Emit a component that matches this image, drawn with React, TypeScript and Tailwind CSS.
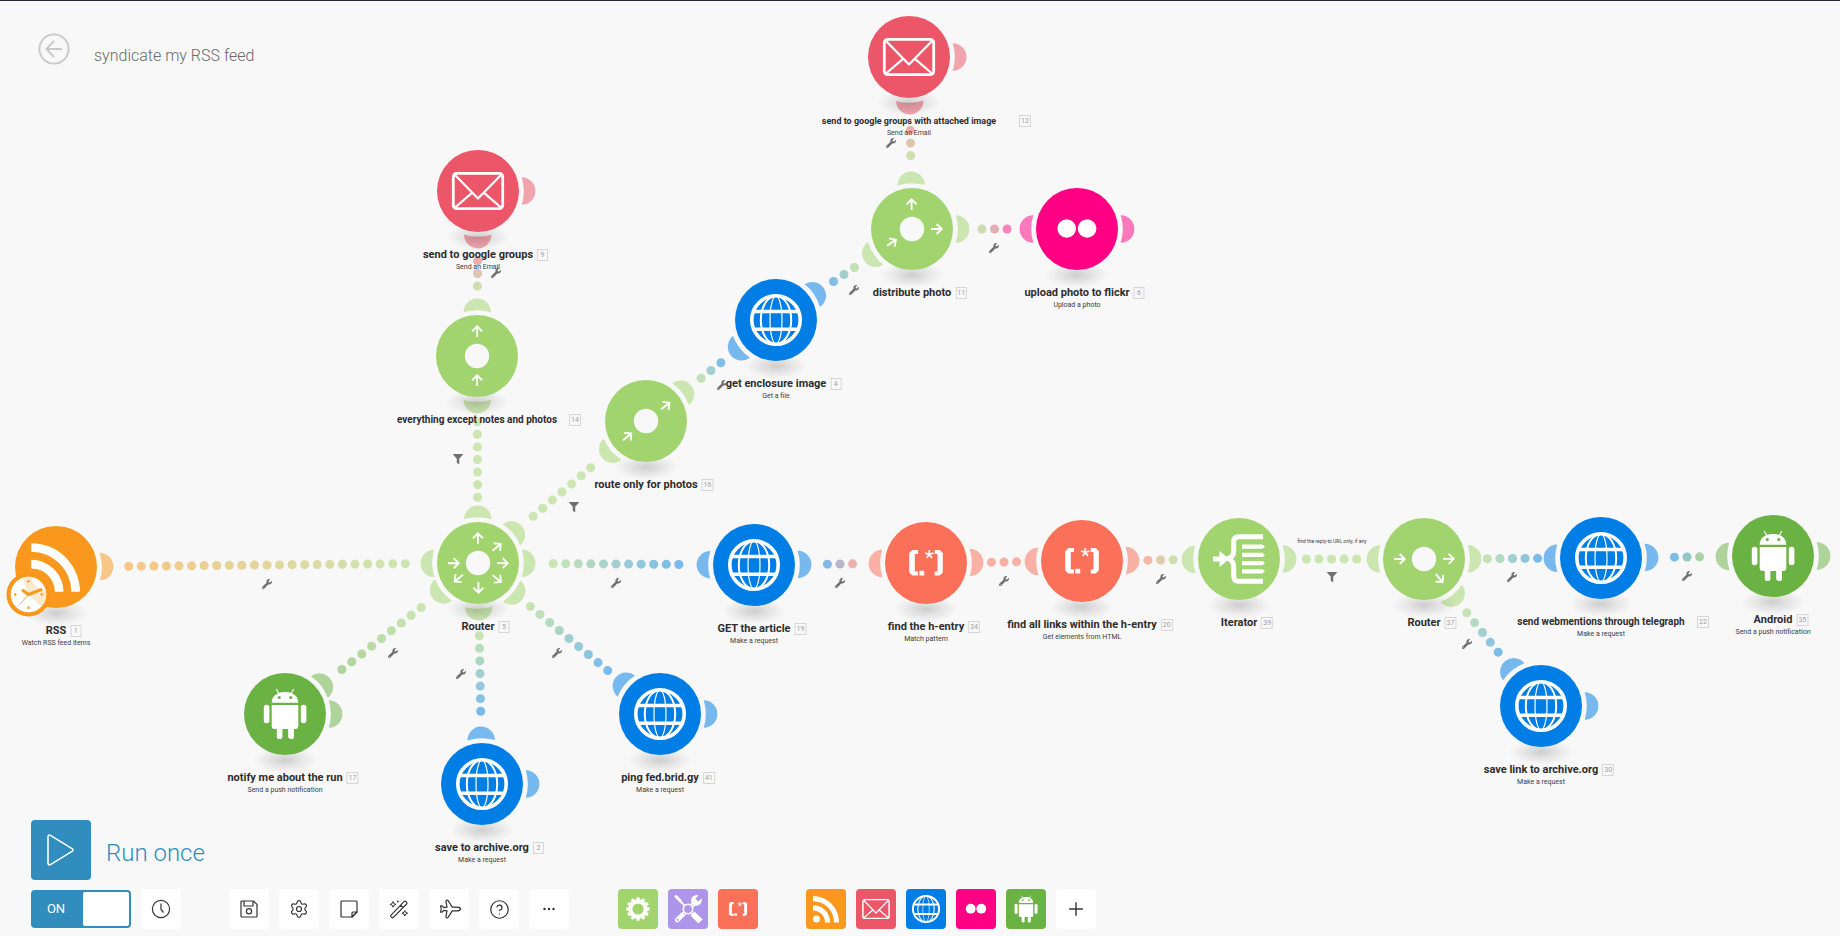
import React from "react";
import { Settings, Plane, CircleHelp } from "lucide-react";
import { FaFilter, FaWrench } from "react-icons/fa";

type Kind = "rss" | "router" | "email" | "globe" | "flickr" | "regex" | "iterator" | "android";

type ModuleNode = {
  id: number;
  kind: Kind;
  x: number;
  y: number;
  title: string;
  sub?: string;
  openPort?: boolean;
  titleClass?: string;
};

type Edge = { from: number; to: number; dots: number };

const COLORS: Record<Kind, string> = {
  rss: "#f9981d",
  router: "#a1d46f",
  email: "#eb5668",
  globe: "#007ee6",
  flickr: "#ff0084",
  regex: "#fb7058",
  iterator: "#a1d46f",
  android: "#6bb245",
};

const NODES: ModuleNode[] = [
  { id: 1, kind: "rss", x: 56, y: 567, title: "RSS", sub: "Watch RSS feed items" },
  { id: 5, kind: "router", x: 478, y: 563, title: "Router" },
  { id: 14, kind: "router", x: 477, y: 356, title: "everything except notes and photos", titleClass: "text-[10px] min-w-[176px]" },
  { id: 9, kind: "email", x: 478, y: 191, title: "send to google groups", sub: "Send an Email", openPort: true },
  { id: 16, kind: "router", x: 646, y: 421, title: "route only for photos" },
  { id: 4, kind: "globe", x: 776, y: 320, title: "get enclosure image", sub: "Get a file" },
  { id: 11, kind: "router", x: 912, y: 229, title: "distribute photo" },
  { id: 12, kind: "email", x: 909, y: 57, title: "send to google groups with attached image", sub: "Send an Email", openPort: true, titleClass: "text-[9px] min-w-[212px]" },
  { id: 6, kind: "flickr", x: 1077, y: 229, title: "upload photo to flickr", sub: "Upload a photo", openPort: true },
  { id: 17, kind: "android", x: 285, y: 714, title: "notify me about the run", sub: "Send a push notification", openPort: true },
  { id: 2, kind: "globe", x: 482, y: 784, title: "save to archive.org", sub: "Make a request", openPort: true },
  { id: 41, kind: "globe", x: 660, y: 714, title: "ping fed.brid.gy", sub: "Make a request", openPort: true },
  { id: 19, kind: "globe", x: 754, y: 565, title: "GET the article", sub: "Make a request" },
  { id: 24, kind: "regex", x: 926, y: 563, title: "find the h-entry", sub: "Match pattern" },
  { id: 20, kind: "regex", x: 1082, y: 561, title: "find all links within the h-entry", sub: "Get elements from HTML" },
  { id: 39, kind: "iterator", x: 1239, y: 559, title: "Iterator" },
  { id: 37, kind: "router", x: 1424, y: 559, title: "Router" },
  { id: 22, kind: "globe", x: 1601, y: 558, title: "send webmentions through telegraph", sub: "Make a request", titleClass: "text-[10px] min-w-[184px]" },
  { id: 35, kind: "android", x: 1773, y: 556, title: "Android", sub: "Send a push notification", openPort: true },
  { id: 30, kind: "globe", x: 1541, y: 706, title: "save link to archive.org", sub: "Make a request", openPort: true },
];

const EDGES: Edge[] = [
  { from: 1, to: 5, dots: 23 },
  { from: 5, to: 14, dots: 7 },
  { from: 14, to: 9, dots: 3 },
  { from: 5, to: 16, dots: 7 },
  { from: 16, to: 4, dots: 3 },
  { from: 4, to: 11, dots: 3 },
  { from: 11, to: 12, dots: 3 },
  { from: 11, to: 6, dots: 3 },
  { from: 5, to: 17, dots: 9 },
  { from: 5, to: 2, dots: 7 },
  { from: 5, to: 41, dots: 9 },
  { from: 5, to: 19, dots: 11 },
  { from: 19, to: 24, dots: 3 },
  { from: 24, to: 20, dots: 3 },
  { from: 20, to: 39, dots: 3 },
  { from: 39, to: 37, dots: 5 },
  { from: 37, to: 22, dots: 5 },
  { from: 22, to: 35, dots: 3 },
  { from: 37, to: 30, dots: 5 },
];

const WRENCHES: [number, number][] = [
  [267, 584], [393, 653], [461, 674], [557, 653], [616, 583], [840, 583], [1004, 581], [1161, 579],
  [1512, 577], [1467, 644], [1687, 576], [496, 273], [891, 143], [994, 248], [854, 290], [722, 385],
];

const FILTERS: [number, number][] = [[1332, 577], [574, 507], [458, 459]];

const DOT_STEP = 12.57;
const byId = new Map(NODES.map((n) => [n.id, n]));

function mix(a: string, b: string, t: number): string {
  const channel = (c: string, i: number) => parseInt(c.slice(1 + i * 2, 3 + i * 2), 16);
  const parts = [0, 1, 2].map((i) => Math.round(channel(a, i) * (1 - t) + channel(b, i) * t));
  return `rgb(${parts.join(",")})`;
}

function angle(a: ModuleNode, b: ModuleNode): number {
  return (Math.atan2(b.y - a.y, b.x - a.x) * 180) / Math.PI;
}

function Connections() {
  return (
    <svg className="absolute inset-0 h-full w-full" aria-hidden="true">
      <defs>
        <radialGradient id="node-shadow">
          <stop offset="0" stopColor="#000" stopOpacity="0.17" />
          <stop offset="0.5" stopColor="#000" stopOpacity="0.08" />
          <stop offset="1" stopColor="#000" stopOpacity="0" />
        </radialGradient>
      </defs>
      {EDGES.map((e) => {
        const a = byId.get(e.from)!;
        const b = byId.get(e.to)!;
        const length = Math.hypot(b.x - a.x, b.y - a.y);
        const start = (length - (e.dots - 1) * DOT_STEP) / 2;
        return Array.from({ length: e.dots }, (_, i) => {
          const d = (start + i * DOT_STEP) / length;
          return (
            <circle
              key={`${e.from}-${e.to}-${i}`}
              cx={a.x + (b.x - a.x) * d}
              cy={a.y + (b.y - a.y) * d}
              r="4.5"
              fill={mix(COLORS[a.kind], COLORS[b.kind], (i + 0.3) / (e.dots - 0.4))}
              opacity="0.52"
            />
          );
        });
      })}
      {NODES.map((n) => {
        const ports = EDGES.filter((e) => e.from === n.id || e.to === n.id).map((e) =>
          angle(n, byId.get(e.from === n.id ? e.to : e.from)!),
        );
        if (n.openPort) ports.push(0);
        return (
          <g key={n.id} transform={`translate(${n.x} ${n.y})`}>
            {ports.map((p) => (
              <path
                key={p}
                d="M43.7-13.7A13.7 13.7 0 0 1 43.7 13.7A45.5 45.5 0 0 0 43.7-13.7Z"
                fill={COLORS[n.kind]}
                opacity="0.52"
                transform={`rotate(${p})`}
              />
            ))}
            <ellipse cy="46" rx="32" ry="13" fill="url(#node-shadow)" />
          </g>
        );
      })}
    </svg>
  );
}

function Globe() {
  return (
    <g fill="none" stroke="#fff">
      <circle r="24.2" strokeWidth="3.6" />
      <path d="M-22.5-8.5H22.5M-22.5 9.3H22.5" strokeWidth="3.6" />
      <ellipse rx="15.2" ry="24" strokeWidth="2" />
      <ellipse rx="6" ry="24" strokeWidth="1.2" />
    </g>
  );
}

function Envelope() {
  return (
    <g fill="none" stroke="#fff" strokeLinejoin="round">
      <rect x="-24.7" y="-17.7" width="49.4" height="35.4" rx="3.5" strokeWidth="2.8" />
      <path d="M-23.5-16.5L0 7.5L23.5-16.5M-23 16.5L-6 1.8M23 16.5L6 1.8" strokeWidth="2.3" />
    </g>
  );
}

function Regex() {
  return (
    <g>
      <path
        fill="#fff"
        d="M-8-13V-9H-11.2V8.6H-8V12.6H-13.5L-16.8 9.6V-10L-13.5-13ZM8.7-13V-9H11.5V8.6H8.7V12.6H13.7L16.8 9.6V-10L13.7-13ZM-6.7 7.7H-1.8V12.6H-6.7Z"
      />
      <path stroke="#fff" strokeWidth="1.7" d="M3.3-8.6V-13M3.3-8.6L7.5-10M3.3-8.6L5.9-5M3.3-8.6L.7-5M3.3-8.6L-.9-10" />
    </g>
  );
}

function Android({ eyes }: { eyes: string }) {
  return (
    <g>
      <path
        fill="#fff"
        d="M-13.3-11.2C-13.3-17-9-22 0-22S13.3-17 13.3-11.2ZM-13.3-9H13.3V12.6Q13.3 15 11 15H9V23Q9 25 6.2 25T3.2 23V15H-2.6V23Q-2.6 25-5.4 25T-8.2 23V15H-11Q-13.3 15-13.3 12.6Z"
      />
      <rect x="-21.2" y="-9.2" width="5.6" height="18.4" rx="2.6" fill="#fff" />
      <rect x="15.8" y="-9.2" width="5.6" height="18.4" rx="2.6" fill="#fff" />
      <path stroke="#fff" strokeWidth="1.2" d="M-8.8-25L-6.3-20.5M8.8-25L6.3-20.5" />
      <circle cx="-5.8" cy="-16.5" r="1.6" fill={eyes} />
      <circle cx="5.8" cy="-16.5" r="1.6" fill={eyes} />
    </g>
  );
}

function Iterator() {
  return (
    <g>
      <path
        fill="none"
        stroke="#fff"
        strokeWidth="5"
        d="M24-22.3H-.5Q-5.3-22.3-5.3-17V-7.5Q-5.3-2.5-10.5-.6Q-5.3 2.5-5.3 7.5V17Q-5.3 22.3-.5 22.3H24"
      />
      <path fill="#fff" d="M-26-2.6H-19.5V-8L-9.5 0L-19.5 8V2.6H-26Z" />
      <path
        fill="#fff"
        d="M3-14.4H23.5L26-12.3L23.5-10.2H3ZM3-6.2H23.5L26-4.1L23.5-2H3ZM3 2H23.5L26 4.1L23.5 6.2H3ZM3 10.2H23.5L26 12.3L23.5 14.4H3Z"
      />
    </g>
  );
}

function RssWithClock() {
  return (
    <g>
      <path
        fill="#fff"
        d="M-24.8-23.8A48.7 48.7 0 0 1 24 24.8H15.3A40 40 0 0 0-24.8-15.3ZM-24.8-7.3A32.3 32.3 0 0 1 7.5 24.8H-1.2A23.4 23.4 0 0 0-24.8 1.4Z"
      />
      <g transform="translate(-27.5 27.5)">
        <circle r="22" fill="#f9981d" />
        <circle r="21" fill="none" stroke="#e88a12" strokeWidth="0.6" opacity="0.5" />
        <circle r="17.8" fill="#fff" />
        <path fill="#fde8d0" d="M0 0L-6-16.7A17.8 17.8 0 0 1 3-17.5Q4-9 11.5-6L17-4.8A17.8 17.8 0 0 1 13 12Z" />
        <path stroke="#f9981d" strokeWidth="3" strokeLinecap="round" d="M-5.5-4L0 0L12.5-4.8" fill="none" />
        <path stroke="#f9981d" strokeWidth="0.8" d="M2-2L-9 10" />
        <g fill="#f9981d">
          <circle cy="-13.2" r="1.2" />
          <circle cy="13.2" r="1.2" />
          <circle cx="-13.2" r="1.2" />
          <circle cx="13.2" r="1.2" />
        </g>
      </g>
    </g>
  );
}

function RouterGlyph({ node }: { node: ModuleNode }) {
  const links = EDGES.filter((e) => e.from === node.id || e.to === node.id);
  return (
    <g>
      <circle r="12.2" fill="#f8f8f8" />
      {links.map((e) => {
        const outgoing = e.from === node.id;
        const a = angle(node, byId.get(outgoing ? e.to : e.from)!);
        return (
          <g key={`${e.from}-${e.to}`} transform={`rotate(${a}) translate(24.5 0) rotate(${outgoing ? 0 : 180})`}>
            <path d="M-5.5 0H5M.2-5L5.2 0L.2 5" fill="none" stroke="#fff" strokeWidth="1.9" />
          </g>
        );
      })}
    </g>
  );
}

function Glyph({ node }: { node: ModuleNode }) {
  switch (node.kind) {
    case "rss":
      return <RssWithClock />;
    case "router":
      return <RouterGlyph node={node} />;
    case "email":
      return <Envelope />;
    case "globe":
      return <Globe />;
    case "flickr":
      return (
        <g fill="#fff">
          <circle cx="-10.3" cy="-0.5" r="9.3" />
          <circle cx="10.1" cy="-0.5" r="9.3" />
        </g>
      );
    case "regex":
      return <Regex />;
    case "iterator":
      return <Iterator />;
    case "android":
      return <Android eyes={COLORS.android} />;
  }
}

function NodeView({ node }: { node: ModuleNode }) {
  return (
    <div className="absolute" style={{ left: node.x, top: node.y }}>
      <button type="button" aria-label={node.title} className="absolute -top-[41px] -left-[41px] block size-[82px] rounded-full">
        <svg viewBox="-41 -41 82 82" className="size-full overflow-visible">
          <circle r="41" fill={COLORS[node.kind]} />
          <Glyph node={node} />
        </svg>
      </button>
      <div className="absolute top-[57px] left-0 flex -translate-x-1/2 flex-col items-center whitespace-nowrap">
        <div className={`relative text-center leading-[14px] font-bold text-[#2d2d2d] ${node.titleClass ?? "text-[11px]"}`}>
          {node.title}
          <span className="absolute top-px left-full ml-1 flex h-3 min-w-[11px] items-center justify-center border border-[#d6d6d6] px-px text-[7px] leading-none font-normal text-[#a0a0a0]">
            {node.id}
          </span>
        </div>
        {node.sub && <div className="text-[7px] leading-[10px] text-[#3c3c3c]">{node.sub}</div>}
      </div>
    </div>
  );
}

function ToolButton({ label, children }: { label: string; children: React.ReactNode }) {
  return (
    <button type="button" aria-label={label} className="flex size-10 items-center justify-center rounded bg-white text-[#333]">
      {children}
    </button>
  );
}

function AppButton({ label, color, children }: { label: string; color: string; children: React.ReactNode }) {
  return (
    <button type="button" aria-label={label} className={`size-10 overflow-hidden rounded ${color}`}>
      <svg viewBox="-20 -20 40 40" className="size-full">
        {children}
      </svg>
    </button>
  );
}

const TEETH = Array.from({ length: 12 }, (_, i) => i * 30);

export default function App() {
  return (
    <div className="relative flex min-h-screen flex-col overflow-hidden border-t border-[#28263a] bg-[#f8f8f8] font-[Roboto,sans-serif]">
      <main aria-label="Scenario" className="absolute inset-x-0 -top-px bottom-0">
        <Connections />
        {NODES.map((n) => (
          <NodeView key={n.id} node={n} />
        ))}
        {WRENCHES.map(([x, y]) => (
          <div key={`${x}-${y}`} className="absolute -translate-1/2 text-[10px] text-[#6f6f6f]" style={{ left: x, top: y }}>
            <FaWrench />
          </div>
        ))}
        {FILTERS.map(([x, y]) => (
          <div key={`${x}-${y}`} className="absolute -translate-1/2 text-[10px] text-[#6f6f6f]" style={{ left: x, top: y }}>
            <FaFilter />
          </div>
        ))}
        <div className="absolute top-[541px] left-[1332px] -translate-1/2 text-[5px] leading-2 whitespace-nowrap text-[#3c3c3c]">
          find the reply-to URL only, if any
        </div>
      </main>

      <header className="relative flex w-fit items-start gap-6 pt-8 pl-[38px]">
        <button type="button" aria-label="Back" className="text-[#c9c9c9]">
          <svg viewBox="0 0 32 32" className="size-8" fill="none" stroke="currentColor" strokeWidth="1.9">
            <circle cx="16" cy="16" r="14.6" />
            <path d="M24 16H8.8M16 8L8.4 16L16 24" />
          </svg>
        </button>
        <h1 className="pt-[11px] text-base leading-6 font-light text-[#6a6a6a]">syndicate my RSS feed</h1>
      </header>

      <footer className="relative mt-auto flex w-fit flex-col gap-2 pb-[7px] pl-[31px]">
        <button type="button" className="flex w-fit items-center gap-[15px] text-2xl font-light text-[#308dbd]">
          <span className="flex size-[60px] items-center justify-center rounded bg-[#308dbd]">
            <svg viewBox="0 0 30 34" className="h-[34px] w-[30px]" fill="none" stroke="#fff" strokeWidth="1.6" strokeLinejoin="round">
              <path d="M2 4.2Q2 .9 4.8 2.6L26 15.6Q28 17 26 18.4L4.8 31.4Q2 33.1 2 29.8Z" />
            </svg>
          </span>
          <span className="pt-1.5">Run once</span>
        </button>

        <div className="flex items-center gap-12 pt-px">
          <div className="flex items-center gap-[10px]">
            <label className="flex h-[38px] w-[100px] items-stretch rounded bg-[#308dbd] p-0.5 text-[13px] text-white">
              <input type="checkbox" role="switch" defaultChecked aria-label="Scheduling" className="sr-only" />
              <span className="flex flex-1 items-center justify-center pr-1">ON</span>
              <span className="w-[46px] rounded-xs bg-white" />
            </label>
            <ToolButton label="Schedule">
              <svg viewBox="0 0 20 20" className="size-5" fill="none" stroke="currentColor" strokeWidth="1.2">
                <circle cx="10" cy="10" r="8.6" />
                <path d="M10 4.5V10.5L12.5 13.5" />
              </svg>
            </ToolButton>
          </div>

          <div className="flex items-center gap-[10px]">
            <ToolButton label="Save">
              <svg viewBox="0 0 20 20" className="size-5" fill="none" stroke="currentColor" strokeWidth="1.2" strokeLinejoin="round">
                <path d="M2 3Q2 2 3 2H14.5L18 5.5V17Q18 18 17 18H3Q2 18 2 17Z" />
                <path d="M5 2V7H14V2" />
                <circle cx="10" cy="12.2" r="2.6" />
              </svg>
            </ToolButton>
            <ToolButton label="Scenario settings">
              <Settings size={20} strokeWidth={1.4} />
            </ToolButton>
            <ToolButton label="Notes">
              <svg viewBox="0 0 20 20" className="size-5" fill="none" stroke="currentColor" strokeWidth="1.2" strokeLinejoin="round">
                <path d="M3 2H17Q18 2 18 3V13L13 18H3Q2 18 2 17V3Q2 2 3 2Z" />
                <path d="M18 13H14Q13 13 13 14V18Z" />
              </svg>
            </ToolButton>
            <ToolButton label="Auto-align">
              <svg viewBox="0 0 20 20" className="size-5" fill="none" stroke="currentColor" strokeWidth="1.2" strokeLinejoin="round">
                <path d="M1.8 16.4L15 2.6Q16 1.6 17 2.6L17.6 3.2Q18.4 4.2 17.6 5L4.4 18.4Q3.6 19 2.8 18.4L1.9 17.6Q1.3 17 1.8 16.4ZM11.6 6.2L14.2 8.6" />
                <path strokeWidth="1" d="M4 2.6L5 4.6L7 5.4L5 6.2L4 8.2L3.2 6.2L1.2 5.4L3.2 4.6ZM15.8 11.6L16.6 13.4L18.6 14.2L16.6 15L15.8 17L15 15L13 14.2L15 13.4ZM8.8 1.6V3.4M7.9 2.5H9.7" />
              </svg>
            </ToolButton>
            <ToolButton label="Explain flow">
              <Plane size={22} strokeWidth={1.3} className="rotate-45" />
            </ToolButton>
            <ToolButton label="Help">
              <CircleHelp size={21} strokeWidth={1.4} />
            </ToolButton>
            <ToolButton label="More">
              <svg viewBox="0 0 20 20" className="size-5" fill="currentColor">
                <circle cx="5.5" cy="10" r="1.2" />
                <circle cx="10" cy="10" r="1.2" />
                <circle cx="14.5" cy="10" r="1.2" />
              </svg>
            </ToolButton>
          </div>

          <div className="flex items-center gap-[10px] pl-px">
            <AppButton label="Flow control" color="bg-[#a1d46f]">
              <circle r="7.6" fill="none" stroke="#fff" strokeWidth="4" />
              {TEETH.map((t) => (
                <path key={t} d="M-1.9-8.5L-1.2-11.4H1.2L1.9-8.5Z" fill="#fff" stroke="#fff" strokeWidth="0.5" transform={`rotate(${t})`} />
              ))}
            </AppButton>
            <AppButton label="Tools" color="bg-[#ad95e9]">
              <g stroke="#fff">
                <path d="M-9-9L6 6" strokeWidth="1.8" />
                <path d="M-12-12.5L-8-8.5" strokeWidth="3" strokeLinecap="round" />
                <path d="M4.5 4.5L12.5 12.5" strokeWidth="6" />
                <path d="M-10.8 11.2L7-6.5" strokeWidth="4.6" strokeLinecap="round" />
              </g>
              <path fill="#fff" d="M10.6-13.7L7.4-10.2L10.2-7.4L13.7-10.6A5.8 5.8 0 0 1 5.2-4.2L3.4-6.2A5.8 5.8 0 0 1 10.6-13.7Z" />
              <circle cx="-10.4" cy="10.8" r="1.1" fill="#ad95e9" />
              <circle r="5.6" fill="#fff" />
              <circle r="6.1" fill="none" stroke="#ad95e9" strokeWidth="1" strokeDasharray="1.6 1.6" />
              <circle r="3.9" fill="#ad95e9" />
            </AppButton>
            <AppButton label="Text parser" color="bg-[#fb7058]">
              <g transform="scale(0.54)">
                <Regex />
              </g>
            </AppButton>
          </div>

          <div className="flex items-center gap-[10px]">
            <AppButton label="RSS" color="bg-[#f9981d]">
              <path fill="#fff" d="M-13-13A26 26 0 0 1 13 13.5H8A21 21 0 0 0-13-7.8ZM-13-3.8A17.2 17.2 0 0 1 4.2 13.5H-1A12 12 0 0 0-13 1.4Z" />
              <circle cx="-9.6" cy="10" r="3.5" fill="#fff" />
            </AppButton>
            <AppButton label="Email" color="bg-[#eb5668]">
              <g transform="scale(0.53)">
                <Envelope />
              </g>
            </AppButton>
            <AppButton label="HTTP" color="bg-[#007ee6]">
              <g transform="scale(0.54)">
                <Globe />
              </g>
            </AppButton>
            <AppButton label="Flickr" color="bg-[#ff0084]">
              <circle cx="-5.3" cy="-0.3" r="4.9" fill="#fff" />
              <circle cx="5.3" cy="-0.3" r="4.9" fill="#fff" />
            </AppButton>
            <AppButton label="Android" color="bg-[#6bb245]">
              <g transform="scale(0.54)">
                <Android eyes={COLORS.android} />
              </g>
            </AppButton>
            <ToolButton label="Add module">
              <svg viewBox="0 0 20 20" className="size-5" stroke="currentColor" strokeWidth="1.4">
                <path d="M10 3.2V16.8M3.2 10H16.8" />
              </svg>
            </ToolButton>
          </div>
        </div>
      </footer>
    </div>
  );
}
